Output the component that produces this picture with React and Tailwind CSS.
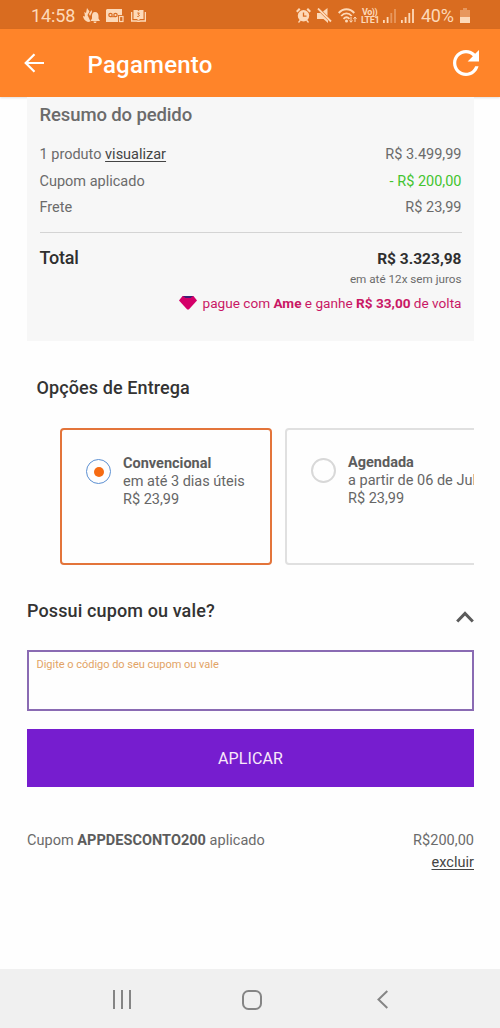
const StatusBar = () => (
  <div className="flex h-[29px] w-full shrink-0 items-center bg-[#d96c20] pl-[31px] pr-[30px] pt-[2px] text-[#fdd9b8]">
    <span className="w-[46px] whitespace-nowrap text-[18px] leading-none tracking-[-0.1px]">14:58</span>

    {/* notification icons */}
    <svg className="ml-[6px] h-4 w-[17px]" viewBox="0 0 17 16" fill="currentColor">
      <path d="M4 0 6.500 3.500 4.500 7l3 6.500L5 14C2 13 .3 11 0 8l2 .5L1.300 4 3 5Z" />
      <path d="m8.500 2 .5 2-2 4-1-2Z" />
      <path d="M12 4c2.500 0 3.500 2 3.500 4v2.500L17 13H7.500L9 10.500V8c0-2 .8-4 3-4Z" />
      <path d="M10.500 13.500h3c0 2-3 2-3 0Z" />
    </svg>
    <svg className="ml-[6px] h-[14px] w-[18px]" viewBox="0 0 18 14" fill="none">
      <path d="M1 0h15v6h-4v7H0V1Z" fill="currentColor" />
      <circle cx="4.500" cy="6" r="1.700" stroke="#d96c20" strokeWidth="1.200" />
      <circle cx="9.500" cy="6" r="1.700" stroke="#d96c20" strokeWidth="1.200" />
      <path d="M4.500 7.700h5" stroke="#d96c20" />
      <rect x="13.500" y="7.500" width="3.500" height="5" stroke="currentColor" strokeWidth="1.200" />
    </svg>
    <svg className="ml-[7px] h-3 w-[15px]" viewBox="0 0 15 12">
      <path d="M2.500 0h4l1 1 1-1h4v9H9L7.500 10.500 6 9H2.500Z" fill="currentColor" />
      <path d="M.6 2v9h5l2 .5 2-.5h4.800V2" fill="none" stroke="currentColor" strokeWidth="1.400" />
      <path d="M6.300 3h2L7.300 4.500C9 5 8.500 6.800 6.300 6.500" fill="none" stroke="#d96c20" />
    </svg>

    {/* system icons */}
    <svg className="ml-auto h-[15px] w-[15px]" viewBox="0 0 15 15" fill="currentColor">
      <path d="m0 3 3-3 1.500 1.500-3 3ZM15 3l-3-3-1.500 1.500 3 3ZM2 14l2-2.500 1 1L3 15ZM13 14l-2-2.500-1 1 2 2.500Z" />
      <circle cx="7.500" cy="7.700" r="5.700" />
      <path d="M7.500 4.500v3.700h3" fill="none" stroke="#d96c20" strokeWidth="1.300" />
    </svg>
    <svg className="ml-[6px] h-[15px] w-[15px]" viewBox="0 0 15 15" fill="currentColor">
      <path d="M0 5h3.500L11 12.500V15L6.500 11H0ZM6 3.500 10.500 0v8Z" />
      <path d="m1 .5 13 13" stroke="currentColor" strokeWidth="1.800" />
    </svg>
    <svg className="ml-[6px] h-4 w-[19px]" viewBox="0 0 19 16" fill="none" stroke="currentColor">
      <path d="M.7 5c4.500-5 11-5 15.600 0M3.200 8c3-3.500 7.500-3.500 10.500 0M5.500 10.800c2-2 4-2 6 0" strokeWidth="1.900" />
      <circle cx="8.500" cy="13" r="1.500" fill="currentColor" stroke="none" />
      <path d="M13 9v5m-1.500-1.500L13 14.300l1.500-1.800M17 14V9m-1.500 1.800L17 9l1.500 1.800" />
    </svg>
    <div className="ml-[4px] flex w-[19px] flex-col whitespace-nowrap text-[9px] font-bold leading-[8px] tracking-[-0.5px]">
      <span className="pl-[1px]">Vo))</span>
      <span className="tracking-[-0.3px]">LTE1</span>
    </div>
    <svg className="ml-[3px] h-[14px] w-[13px]" viewBox="0 0 13 14" fill="currentColor">
      <path d="M0 11h1.800v3H0ZM3.700 8h1.800v6H3.700Z" />
      <path d="M7.400 4h1.800v10H7.400ZM11.100 0h1.800v14h-1.800Z" opacity=".4" />
    </svg>
    <svg className="ml-[5px] h-[14px] w-[13px]" viewBox="0 0 13 14" fill="currentColor">
      <path d="M0 11h1.800v3H0ZM3.700 8h1.800v6H3.700ZM7.400 4h1.800v10H7.400ZM11.100 0h1.800v14h-1.800Z" />
    </svg>
    <span className="ml-[7px] w-[33px] whitespace-nowrap text-[18px] leading-none tracking-[-0.3px]">40%</span>
    <svg className="ml-[6px] h-[15px] w-[10px]" viewBox="0 0 10 15" fill="currentColor">
      <path d="M3 0h4v2h3v7H0V2h3Z" opacity=".4" />
      <path d="M0 9h10v6H0Z" />
    </svg>
  </div>
);

const Header = () => (
  <header className="flex h-[68px] shrink-0 items-center bg-[#ff8429] pl-[24px] pr-[21px] text-white shadow-[0_1px_2px_rgba(0,0,0,0.12)]">
    <button aria-label="Voltar">
      <svg className="h-5 w-5" viewBox="0 0 20 20" fill="none" stroke="currentColor" strokeWidth="2.200">
        <path d="M20 10H2M10.500 1.200 1.700 10l8.800 8.800" />
      </svg>
    </button>
    <h1 className="ml-[43.500px] pt-[3px] text-[24px] font-medium leading-none tracking-[0.22px]">Pagamento</h1>
    <button aria-label="Atualizar" className="ml-auto">
      <svg className="h-[26px] w-[26px]" viewBox="4 4 16 16" fill="currentColor">
        <path d="M17.65 6.35C16.2 4.9 14.21 4 12 4c-4.42 0-7.99 3.58-7.99 8s3.57 8 7.99 8c3.73 0 6.84-2.55 7.73-6h-2.08c-.82 2.33-3.04 4-5.65 4-3.31 0-6-2.69-6-6s2.69-6 6-6c1.66 0 3.14.69 4.22 1.78L13 11h7V4l-2.35 2.35z" />
      </svg>
    </button>
  </header>
);

const SummaryRow = ({ label, value, valueClass = "" }) => (
  <div className="flex h-[26.500px] items-center justify-between">
    <span>{label}</span>
    <span className={valueClass}>{value}</span>
  </div>
);

const OrderSummary = () => (
  <section className="ml-[27px] mr-[26px] h-[244px] bg-[#f7f7f7] px-[12.500px] pt-[7px] text-[14.500px] text-[#6b6b6b]">
    <h2 className="text-[18.500px] font-medium leading-[22px] tracking-[-0.12px]">Resumo do pedido</h2>
    <div className="mt-[16px]">
      <SummaryRow
        label={<>1 produto <a className="text-[#444] underline underline-offset-2">visualizar</a></>}
        value="R$ 3.499,99"
      />
      <SummaryRow label="Cupom aplicado" value="- R$ 200,00" valueClass="text-[#43c42f]" />
      <SummaryRow label="Frete" value="R$ 23,99" />
    </div>
    <div className="mt-[10px] flex justify-between border-t border-[#d4d4d4] pt-[15px] text-[#2f2f2f]">
      <span className="text-[18px] font-medium leading-5 tracking-[-0.2px]">Total</span>
      <span className="pt-[1px] text-[15.500px] font-bold leading-5">R$ 3.323,98</span>
    </div>
    <p className="mt-[2px] text-right text-[11.700px] leading-4">em até 12x sem juros</p>
    <p className="mt-[7px] flex items-center justify-end whitespace-nowrap text-[13.600px] leading-[19px] text-[#c91765]">
      <svg className="mr-[6px] h-[14px] w-[18px]" viewBox="0 0 18 14">
        <path d="M3.500 0h11L18 4.500 9.800 13.500H8.200L0 4.500Z" fill="#d40069" />
        <path d="M4 0h10l-2.500 2h-5Z" fill="#3c2076" />
      </svg>
      <span>pague com <b>Ame</b> e ganhe <b>R$ 33,00</b> de volta</span>
    </p>
  </section>
);

const DeliveryOption = ({ name, time, selected }) => (
  <div
    className={`flex h-[137px] w-[212px] shrink-0 items-start rounded-[4px] border-2 pl-[24px] ${
      selected ? "border-[#e3743a] pt-[25px]" : "border-[#e0e0e0] pt-[24px]"
    }`}
  >
    <span
      className={`mt-[4px] flex size-[25px] shrink-0 items-center justify-center rounded-full ${
        selected ? "border border-[#5c90d2]" : "border-2 border-[#d8d8d8]"
      }`}
    >
      {selected && <span className="size-[10px] rounded-full bg-[#f66b12]" />}
    </span>
    <div className="ml-[12px] whitespace-nowrap text-[14.500px] leading-[18px] text-[#666]">
      <p className="font-bold text-[#5c5c5c]">{name}</p>
      <p>{time}</p>
      <p>R$ 23,99</p>
    </div>
  </div>
);

const DeliveryOptions = () => (
  <section className="mt-[35px] pl-[27px] pr-[26px]">
    <h2 className="pl-[9.500px] text-[18px] font-medium leading-6 tracking-[0.1px] text-[#333]">Opções de Entrega</h2>
    <div className="mt-[28px] flex gap-[13px] overflow-hidden pl-[33px]">
      <DeliveryOption name="Convencional" time="em até 3 dias úteis" selected />
      <DeliveryOption name="Agendada" time="a partir de 06 de Julho" />
    </div>
  </section>
);

const Coupon = () => (
  <section className="mt-[34px] pl-[27px] pr-[26px]">
    <div className="flex justify-between">
      <h2 className="text-[18px] font-medium leading-6 tracking-[0.12px] text-[#333]">Possui cupom ou vale?</h2>
      <svg className="mt-[12px] h-3 w-[18px]" viewBox="0 0 18 12" fill="none" stroke="#5b5b5b" strokeWidth="3">
        <path d="m1.200 10.500 7.800-8 7.800 8" />
      </svg>
    </div>
    <div className="mt-[27px] h-[61px] border-2 border-[#8a6bb3] px-[7.500px] pt-[5px]">
      <label className="block text-[11px] leading-4 tracking-[-0.02px] text-[#e2a365]">Digite o código do seu cupom ou vale</label>
    </div>
    <button className="mt-[18px] h-[58px] w-full bg-[#761dcf] pt-[2px] text-[16px] tracking-[0.1px] text-[#f9e9fa]">APLICAR</button>
    <div className="mt-[43px] flex justify-between text-[14.500px] leading-[22px] tracking-[0.03px] text-[#6b6b6b]">
      <p>Cupom <b className="text-[#5c5c5c]">APPDESCONTO200</b> aplicado</p>
      <div className="text-right">
        <p>R$200,00</p>
        <a className="text-[#444] underline underline-offset-2">excluir</a>
      </div>
    </div>
  </section>
);

const NavBar = () => (
  <nav className="mt-auto flex h-[59px] shrink-0 items-center bg-[#f0f0f0] pl-[113px] pt-[2px] text-[#858585]">
    <svg className="h-[19px] w-[18px]" viewBox="0 0 18 19" fill="none" stroke="currentColor" strokeWidth="2">
      <path d="M1 0v19M9 0v19M17 0v19" />
    </svg>
    <svg className="ml-[111px] h-5 w-5" viewBox="0 0 20 20" fill="none" stroke="currentColor" strokeWidth="2">
      <rect x="1" y="1" width="18" height="18" rx="5.500" />
    </svg>
    <svg className="ml-[115px] h-[19px] w-[11px]" viewBox="0 0 11 19" fill="none" stroke="currentColor" strokeWidth="2">
      <path d="M10.300 1 1.500 9.500l8.800 8.500" />
    </svg>
  </nav>
);

export default function App() {
  return (
    <div className="flex h-[1028px] w-[500px] flex-col overflow-hidden bg-[#fefefe] font-[Roboto,sans-serif]">
      <StatusBar />
      <Header />
      <OrderSummary />
      <DeliveryOptions />
      <Coupon />
      <NavBar />
    </div>
  );
}
